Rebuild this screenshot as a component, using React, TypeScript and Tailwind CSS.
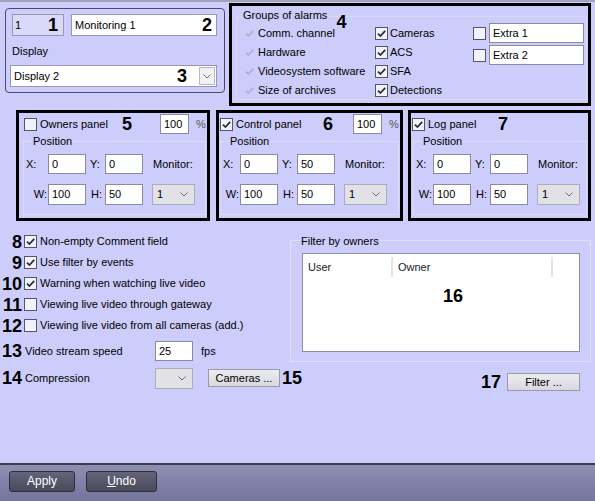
import React from 'react';

function Tick({ color = '#2b2b33' }: { color?: string }) {
  return (
    <svg viewBox="0 0 11 11" className="w-[11px] h-[11px]">
      <path d="M2 5.6 L4.4 8 L9.2 2.8" fill="none" stroke={color} strokeWidth="1.7" />
    </svg>
  );
}

function Checkbox({ checked = false, disabled = false }: { checked?: boolean; disabled?: boolean }) {
  if (disabled) {
    return (
      <span className="w-[13px] h-[13px] shrink-0 flex items-center justify-center">
        <Tick color="#b2b2c6" />
      </span>
    );
  }
  return (
    <span className="w-[13px] h-[13px] shrink-0 border border-[#55556a] bg-[#f2f2fc] flex items-center justify-center">
      {checked && <Tick />}
    </span>
  );
}

function Chevron() {
  return (
    <svg viewBox="0 0 8 5" className="w-[8px] h-[5px]">
      <path d="M0.5 0.5 L4 4 L7.5 0.5" fill="none" stroke="#6e6e82" strokeWidth="1" />
    </svg>
  );
}

function Field({ value, className = '' }: { value: string; className?: string }) {
  return (
    <div className={`h-[20px] shrink-0 bg-white border border-[#8a8aa2] flex items-center pl-[3px] ${className}`}>
      {value}
    </div>
  );
}

function GraySelect({ value, className = '' }: { value: string; className?: string }) {
  return (
    <div className={`h-[21px] shrink-0 bg-[#e2e2e6] border border-[#acacbc] flex items-center justify-between pl-[4px] pr-[6px] ${className}`}>
      <span>{value}</span>
      <Chevron />
    </div>
  );
}

function Num({ children, className = '' }: { children: React.ReactNode; className?: string }) {
  return <span className={`font-bold text-[18px] leading-none text-black shrink-0 ${className}`}>{children}</span>;
}

function SmallButton({ label, className = '' }: { label: string; className?: string }) {
  return (
    <div className={`h-[18px] shrink-0 bg-linear-to-b from-[#ececf0] to-[#d8d8de] border border-[#9a9aaa] flex items-center justify-center ${className}`}>
      {label}
    </div>
  );
}

interface PanelProps {
  className: string;
  headerPl: string;
  checked: boolean;
  title: string;
  titleW: string;
  num: string;
  numW: string;
  percent: boolean;
  groupMl: string;
  xCell: string;
  y: string;
}

function PanelBox({ className, headerPl, checked, title, titleW, num, numW, percent, groupMl, xCell, y }: PanelProps) {
  return (
    <div className={`h-[111px] shrink-0 border-[3px] border-black flex flex-col ${className}`}>
      <div className={`h-[22px] flex items-center ${headerPl}`}>
        <Checkbox checked={checked} />
        <span className={`ml-[3px] shrink-0 ${titleW}`}>{title}</span>
        <Num className={numW}>{num}</Num>
        {percent && (
          <>
            <Field value="100" className="w-[29px]" />
            <span className="ml-[7px] text-[#555]">%</span>
          </>
        )}
      </div>
      <div className={`mt-[6px] mr-[1px] h-[74px] border border-[#dcdcf6] flex flex-col ${groupMl}`}>
        <span className="block w-fit -mt-[7px] ml-[8px] px-[1px] bg-[#cdcdfb]">Position</span>
        <div className="mt-[6px] h-[20px] flex items-center">
          <span className={`pl-[2px] shrink-0 ${xCell}`}>X:</span>
          <Field value="0" className="w-[38px]" />
          <span className="w-[19px] shrink-0 pl-[4px]">Y:</span>
          <Field value={y} className="w-[38px]" />
          <span className="ml-[10px] shrink-0">Monitor:</span>
        </div>
        <div className="mt-[10px] h-[21px] flex items-center">
          <span className={`text-right pr-[1px] shrink-0 ${xCell}`}>W:</span>
          <Field value="100" className="w-[38px] h-[21px]" />
          <span className="w-[19px] shrink-0 text-right pr-[3px]">H:</span>
          <Field value="50" className="w-[38px] h-[21px]" />
          <GraySelect value="1" className="ml-[9px] w-[43px]" />
        </div>
      </div>
    </div>
  );
}

function OptionRow({ num, checked, label }: { num: string; checked: boolean; label: string }) {
  return (
    <div className="h-[21px] flex items-center">
      <Num className="w-[22px] text-right">{num}</Num>
      <span className="ml-[2px]">
        <Checkbox checked={checked} />
      </span>
      <span className="ml-[3px]">{label}</span>
    </div>
  );
}

export default function App() {
  return (
    <div className="w-[595px] h-[501px] flex flex-col bg-[#cdcdfb] text-[11px] leading-[13px] text-black font-['Liberation_Sans',Arial,sans-serif] overflow-hidden">
      <div className="h-[2px] bg-[#a2a2ba]" />

      <div className="flex-1 flex flex-col">
        {/* top row */}
        <div className="flex items-start">
          <div className="ml-[5px] mt-[6px] w-[220px] h-[85px] shrink-0 rounded-[4px] border border-[#4a4a66] pt-[5px] pl-[6px]">
            <div className="flex">
              <div className="w-[52px] h-[22px] bg-[#d9d9f9] border border-[#9898b4] flex items-center justify-between pl-[2px] pr-[5px]">
                <span>1</span>
                <Num>1</Num>
              </div>
              <div className="ml-[7px] w-[146px] h-[22px] bg-white border border-[#9898b4] flex items-center justify-between pl-[3px] pr-[4px]">
                <span>Monitoring 1</span>
                <Num>2</Num>
              </div>
            </div>
            <div className="mt-[9px]">Display</div>
            <div className="mt-[7px] -ml-[2px] w-[207px] h-[22px] bg-white border border-[#9898b4] flex items-center">
              <span className="pl-[3px] flex-1">Display 2</span>
              <Num className="mr-[12px]">3</Num>
              <div className="w-[16px] h-[18px] mr-[1px] border border-[#b8b8c8] bg-[#f2f2f6] flex items-center justify-center">
                <Chevron />
              </div>
            </div>
          </div>

          <div className="ml-[4px] mt-[1px] w-[362px] h-[103px] shrink-0 border-[3px] border-black">
            <div className="mt-[10px] ml-[4px] mr-[1px] h-[84px] border border-[#d8d8f6]">
              <div className="h-[13px] -mt-[8px] flex items-start">
                <span className="ml-[5px] px-[1px] bg-[#cdcdfb]">Groups of alarms</span>
                <Num className="ml-[8px] mt-[4px]">4</Num>
              </div>
              <div className="mt-[2px] flex">
                <div className="ml-[6px] w-[132px] shrink-0 flex flex-col">
                  {['Comm. channel', 'Hardware', 'Videosystem software', 'Size of archives'].map((t) => (
                    <div key={t} className="h-[19px] flex items-center">
                      <Checkbox disabled />
                      <span className="ml-[2px]">{t}</span>
                    </div>
                  ))}
                </div>
                <div className="w-[98px] shrink-0 flex flex-col">
                  {['Cameras', 'ACS', 'SFA', 'Detections'].map((t) => (
                    <div key={t} className="h-[19px] flex items-center">
                      <Checkbox checked />
                      <span className="ml-[2px]">{t}</span>
                    </div>
                  ))}
                </div>
                <div className="-mt-[1px] flex flex-col gap-[2px]">
                  {['Extra 1', 'Extra 2'].map((t) => (
                    <div key={t} className="flex items-center">
                      <Checkbox />
                      <Field value={t} className="ml-[3px] w-[95px]" />
                    </div>
                  ))}
                </div>
              </div>
            </div>
          </div>
        </div>

        {/* panels */}
        <div className="mt-[4px] flex">
          <PanelBox
            className="ml-[16px] w-[194px]"
            headerPl="pl-[5px]"
            checked={false}
            title="Owners panel"
            titleW="w-[82px]"
            num="5"
            numW="w-[38px]"
            percent
            groupMl="ml-[4px]"
            xCell="w-[24px]"
            y="0"
          />
          <PanelBox
            className="ml-[6px] w-[187px]"
            headerPl="pl-[1px]"
            checked
            title="Control panel"
            titleW="w-[87px]"
            num="6"
            numW="w-[30px]"
            percent
            groupMl="ml-[1px]"
            xCell="w-[19px]"
            y="50"
          />
          <PanelBox
            className="ml-[5px] w-[183px]"
            headerPl="pl-[1px]"
            checked
            title="Log panel"
            titleW="w-[70px]"
            num="7"
            numW="w-[20px]"
            percent={false}
            groupMl="ml-[2px]"
            xCell="w-[19px]"
            y="0"
          />
        </div>

        {/* options + filter */}
        <div className="flex">
          <div className="w-[290px] shrink-0 mt-[10px] flex flex-col">
            <OptionRow num="8" checked label="Non-empty Comment field" />
            <OptionRow num="9" checked label="Use filter by events" />
            <OptionRow num="10" checked label="Warning when watching live video" />
            <OptionRow num="11" checked={false} label="Viewing live video through gateway" />
            <OptionRow num="12" checked={false} label="Viewing live video from all cameras (add.)" />
            <div className="mt-[5px] h-[20px] flex items-center">
              <Num className="w-[22px] text-right">13</Num>
              <span className="ml-[3px] w-[130px] shrink-0">Video stream speed</span>
              <Field value="25" className="w-[38px]" />
              <span className="ml-[8px] shrink-0">fps</span>
            </div>
            <div className="mt-[7px] h-[20px] flex items-center">
              <Num className="w-[22px] text-right">14</Num>
              <span className="ml-[3px] w-[130px] shrink-0">Compression</span>
              <GraySelect value="" className="w-[38px] h-[20px]" />
              <SmallButton label="Cameras ..." className="ml-[15px] w-[72px]" />
              <Num className="ml-[2px]">15</Num>
            </div>
          </div>

          <div className="mt-[19px] w-[301px] shrink-0 flex flex-col">
            <div className="h-[122px] border border-[#dedef8] flex flex-col">
              <span className="block w-fit -mt-[6px] ml-[9px] px-[1px] bg-[#cdcdfb]">Filter by owners</span>
              <div className="mt-[5px] ml-[11px] w-[278px] h-[99px] bg-white border border-[#8c8ca2] flex flex-col">
                <div className="h-[26px] flex py-[3px] text-[#222]">
                  <div className="w-[90px] pl-[5px] flex items-center border-r-2 border-[#e4e4e4]">User</div>
                  <div className="w-[160px] pl-[5px] flex items-center border-r-2 border-[#e4e4e4]">Owner</div>
                </div>
                <Num className="mt-[7px] ml-[140px]">16</Num>
              </div>
            </div>
            <div className="mt-[11px] pr-[11px] h-[18px] flex items-center justify-end">
              <Num>17</Num>
              <SmallButton label="Filter ..." className="ml-[6px] w-[73px]" />
            </div>
          </div>
        </div>
      </div>

      {/* bottom bar */}
      <div className="h-[38px] shrink-0 border-t-2 border-[#3c3c4e] bg-linear-to-b from-[#8f8eb2] to-[#75759d] pt-[6px] flex items-start">
        <div className="ml-[9px] w-[66px] h-[21px] rounded-[3px] border border-[#2e2e3a] bg-linear-to-b from-[#64647a] to-[#4a4a5c] text-white text-[12px] flex items-center justify-center">
          Apply
        </div>
        <div className="ml-[11px] w-[71px] h-[21px] rounded-[3px] border border-[#2e2e3a] bg-linear-to-b from-[#64647a] to-[#4a4a5c] text-white text-[12px] flex items-center justify-center">
          <span>
            <span className="underline">U</span>ndo
          </span>
        </div>
      </div>
    </div>
  );
}
